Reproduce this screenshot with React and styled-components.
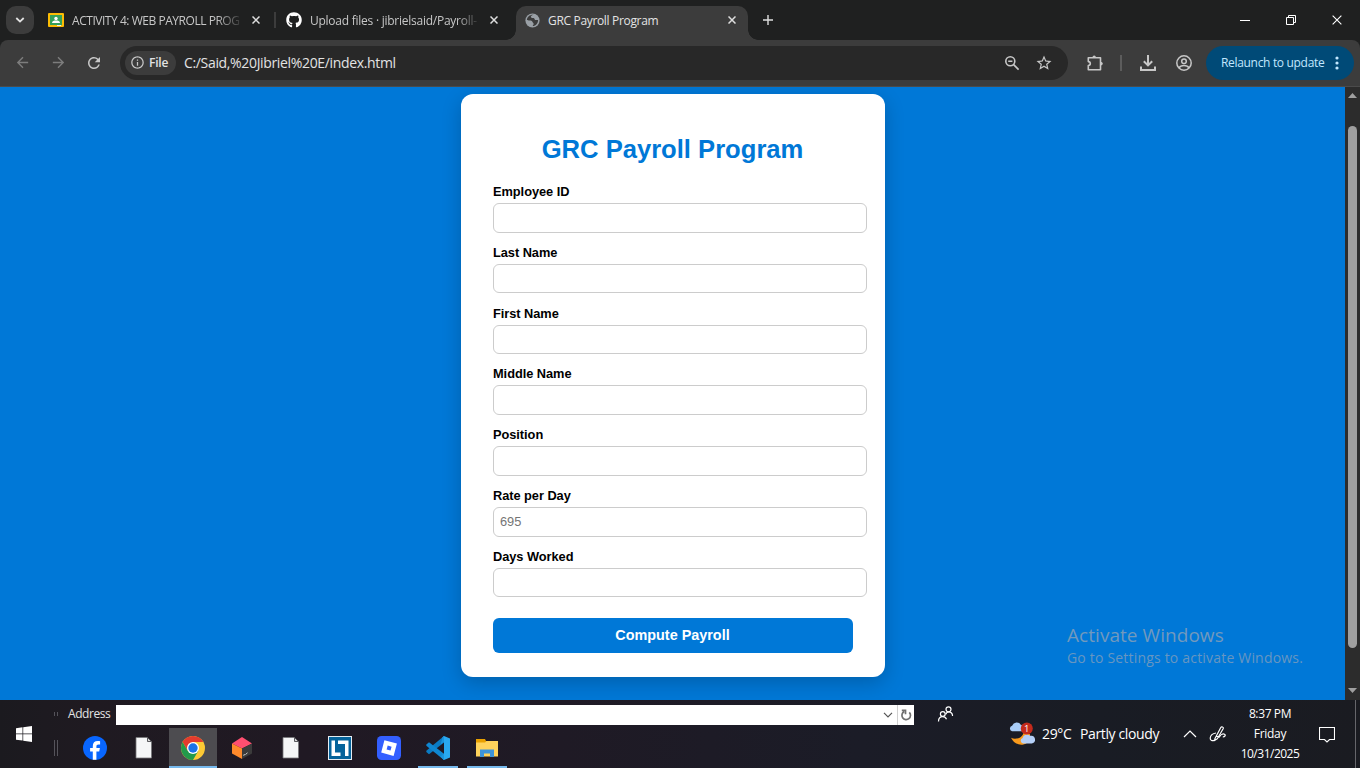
import React from "react";
import styled, { createGlobalStyle } from "styled-components";
import { MdArrowBack, MdArrowForward, MdRefresh, MdInfoOutline, MdStarBorder } from "react-icons/md";
import { FaGithub } from "react-icons/fa";

const Global = createGlobalStyle`
  * { box-sizing: border-box; }
  html, body { margin: 0; padding: 0; overflow: hidden; }
  body { font-family: "Open Sans", "Noto Sans", sans-serif; }
  svg { display: block; flex: none; }
`;

const Screen = styled.div`
  width: 1360px;
  height: 768px;
  display: flex;
  flex-direction: column;
  overflow: hidden;
  background: #1f2020;
`;

const Label = styled.span`
  flex: none;
  width: ${(p) => (p.$w ? `${p.$w}px` : "auto")};
  font-size: ${(p) => p.$size || 12}px;
  line-height: ${(p) => p.$lh || 16}px;
  letter-spacing: ${(p) => p.$ls || 0}px;
  font-weight: ${(p) => p.$weight || 400};
  color: ${(p) => p.$color || "#e3e3e3"};
  white-space: nowrap;
`;

/* ---------- tab strip ---------- */
const TabStrip = styled.div`
  height: 40px;
  flex: none;
  display: flex;
  background: #1f2020;
`;

const TabSearch = styled.div`
  width: 28px;
  height: 28px;
  margin: 6px 6px 0;
  border-radius: 10px;
  background: #3c3c3c;
  display: grid;
  place-items: center;
`;

const Tab = styled.div`
  width: ${(p) => p.$w}px;
  height: 34px;
  margin-top: 6px;
  padding: 0 ${(p) => p.$pr}px 6px ${(p) => p.$pl}px;
  display: flex;
  align-items: center;
  border-radius: 10px 10px 0 0;
  background: ${(p) => (p.$active ? "#3c3c3c" : "transparent")};
  position: relative;
  ${(p) =>
    p.$active &&
    `
    &::before, &::after {
      content: "";
      position: absolute;
      bottom: 0;
      width: 10px;
      height: 10px;
    }
    &::before { left: -10px; background: radial-gradient(circle at 0 0, transparent 9.5px, #3c3c3c 10px); }
    &::after { right: -10px; background: radial-gradient(circle at 100% 0, transparent 9.5px, #3c3c3c 10px); }
  `}
`;

const TabTitle = styled(Label)`
  margin: 2px auto 0 8px;
  ${(p) => p.$fade && `mask-image: linear-gradient(90deg, #000 calc(100% - ${p.$fade}px), rgba(0, 0, 0, 0.15));`}
`;

const TabDivider = styled.div`
  width: 2px;
  height: 16px;
  margin-top: 12px;
  background: #3c3c3c;
`;

const NewTab = styled.div`
  width: 40px;
  height: 40px;
  display: grid;
  place-items: center;
`;

const WindowButtons = styled.div`
  margin-left: auto;
  display: flex;
`;

const WindowButton = styled.div`
  width: 46px;
  height: 40px;
  display: grid;
  place-items: center;
`;

/* ---------- toolbar ---------- */
const Toolbar = styled.div`
  height: 47px;
  flex: none;
  display: flex;
  align-items: center;
  padding: 0 6px 1px 4px;
  border-radius: 8px 8px 0 0;
  border-bottom: 1px solid #4b4b4b;
  background: #3c3c3c;
  color: #c7c7c7;
`;

const ToolButton = styled.div`
  width: ${(p) => p.$w || 36}px;
  height: 34px;
  flex: none;
  display: grid;
  place-items: center;
  color: ${(p) => (p.$dim ? "#7d7d7d" : "#c7c7c7")};
`;

const Omnibox = styled.div`
  width: 948px;
  height: 34px;
  margin-left: 8px;
  padding: 0 8px 0 5px;
  border-radius: 17px;
  background: #282828;
  display: flex;
  align-items: center;
`;

const FileChip = styled.div`
  width: 51px;
  height: 24px;
  margin-right: 8px;
  padding-left: 5px;
  border-radius: 12px;
  background: #3c3c3c;
  display: flex;
  align-items: center;
  gap: 4px;
`;

const Spacer = styled.div`
  flex: 1;
`;

const ToolDivider = styled.div`
  width: 2px;
  height: 16px;
  margin: 0 8px 0 -2px;
  background: #5c5c5c;
`;

const UpdatePill = styled.div`
  width: 148px;
  height: 34px;
  padding: 0 15px 0 15px;
  margin-left: auto;
  border-radius: 17px;
  background: #004a77;
  display: flex;
  align-items: center;
  justify-content: space-between;
`;

/* ---------- page ---------- */
const Viewport = styled.div`
  height: 613px;
  flex: none;
  display: flex;
  position: relative;
`;

const Page = styled.main`
  flex: 1;
  padding: 7px 0 0 461px;
  background: #0078d7;
  overflow: hidden;
  font-family: "Liberation Sans", Arial, sans-serif;
`;

const Card = styled.form`
  width: 424px;
  height: 583px;
  padding: 32px;
  border-radius: 12px;
  background: #fff;
  box-shadow: 0 6px 20px rgba(0, 0, 0, 0.2);
`;

const Title = styled.h2`
  height: 57.1px;
  margin: 0 1px 0 0;
  padding-top: 9px;
  font-size: 25.6px;
  line-height: 29px;
  text-align: center;
  color: #0078d7;
`;

const Field = styled.label`
  display: block;
  height: 60.8px;
  padding-top: 1px;
  font-size: 12.8px;
  line-height: 15px;
  letter-spacing: -0.04px;
  font-weight: 700;
  color: #000;
`;

const Input = styled.input`
  display: block;
  width: 374px;
  height: 29.6px;
  margin-top: 4px;
  padding: 0 6px 1px;
  border: 1px solid #ccc;
  border-radius: 6px;
  background: #fff;
  font: 400 12.8px "Liberation Sans", Arial, sans-serif;
  outline: none;
  &::placeholder { color: #757575; }
`;

const Submit = styled.button`
  display: block;
  width: 360px;
  height: 35px;
  margin-top: 9.2px;
  padding: 0 1px 0 0;
  border: 0;
  border-radius: 6px;
  background: #0078d7;
  color: #fff;
  font: 700 14.4px "Liberation Sans", Arial, sans-serif;
`;

const ScrollTrack = styled.div`
  width: 15px;
  padding: 6px 0 7px;
  background: #2c2c2c;
  display: flex;
  flex-direction: column;
  align-items: center;
`;

const ScrollThumb = styled.div`
  width: 9px;
  height: 522px;
  margin: 28px 0 auto;
  border-radius: 5px;
  background: #9f9f9f;
`;

const Watermark = styled.div`
  position: absolute;
  left: 1067px;
  top: 536px;
  display: flex;
  flex-direction: column;
`;

/* ---------- taskbar ---------- */
const Taskbar = styled.footer`
  height: 68px;
  display: flex;
  background: linear-gradient(90deg, #1b1a1f 0, #1f1a21 90px, #201923 300px, #1f1a25 560px, #1b1c27 860px, #191c24 1100px, #1a1b21 1360px);
`;

const StartButton = styled.div`
  width: 48px;
  display: grid;
  place-items: center;
`;

const Bands = styled.div`
  width: 866px;
  display: flex;
  flex-direction: column;
`;

const AddressBand = styled.div`
  height: 28px;
  padding: 0 0 0 6px;
  display: flex;
  align-items: center;
`;

const AddressLabel = styled(Label)`
  margin-left: 10px;
`;

const Grip = styled.div`
  width: 4px;
  height: ${(p) => p.$h}px;
  border: solid #55535a;
  border-width: 0 1px;
`;

const AddressBox = styled.div`
  width: 798px;
  height: 20px;
  flex: none;
  margin-top: 2px;
  margin-left: auto;
  background: #fff;
  display: flex;
  align-items: center;
  justify-content: flex-end;
`;

const AddressRefresh = styled.div`
  width: 17px;
  height: 20px;
  margin-left: 4px;
  border-left: 1px solid #d0d0d0;
  display: grid;
  place-items: center;
`;

const AppsBand = styled.div`
  height: 40px;
  padding-left: 6px;
  display: flex;
  align-items: center;
`;

const Apps = styled.div`
  display: flex;
  gap: 1px;
  margin-left: 13px;
`;

const AppButton = styled.div`
  width: 48px;
  height: 40px;
  display: flex;
  flex-direction: column;
  align-items: center;
  padding-top: 8px;
  background: ${(p) => (p.$active ? "#4d4c50" : "transparent")};
  &::after {
    content: "";
    width: ${(p) => (p.$active ? 48 : 40)}px;
    height: 2px;
    margin-top: auto;
    background: ${(p) => (p.$open ? "#76b9ed" : "transparent")};
  }
`;

const People = styled.div`
  width: 64px;
  padding: 6px 0 0 23px;
`;

const Tray = styled.div`
  flex: 1;
  padding-left: 31px;
  display: flex;
  align-items: center;
`;

const WeatherIcon = styled.div`
  width: 33px;
`;

const TrayIcon = styled.div`
  width: ${(p) => p.$w}px;
  display: grid;
  place-items: center;
`;

const Clock = styled.div`
  width: 74px;
  display: flex;
  flex-direction: column;
  align-items: center;
`;

const ShowDesktop = styled.div`
  width: 5px;
  height: 68px;
  margin-left: auto;
  border-left: 1px solid #66666b;
`;

/* ---------- drawings ---------- */
const CloseX = ({ size = 8, color = "#dedede", sw = 1.5 }) => (
  <svg width={size} height={size} viewBox="0 0 8 8" stroke={color} strokeWidth={sw} fill="none">
    <path d="M.5 .5l7 7M7.5 .5l-7 7" />
  </svg>
);

const ClassroomIcon = () => (
  <svg width="16" height="14" viewBox="0 0 16 14">
    <rect width="16" height="14" rx="1" fill="#fbbc04" />
    <rect x="2" y="2" width="12" height="10" fill="#34a05a" />
    <circle cx="8" cy="5.500" r="1.700" fill="#fff" />
    <path d="M4 10c0-1.900 2-2.400 4-2.400s4 .5 4 2.400z" fill="#fff" />
    <path d="M9 12h4v1H9z" fill="#f1f1f1" />
  </svg>
);

const GlobeIcon = () => (
  <svg width="15" height="15" viewBox="0 0 15 15">
    <circle cx="7.5" cy="7.5" r="7.1" fill="#9aa0a6" />
    <path d="M8.600 1.900C6.700 1.900 5.700 2.900 5.900 4c.2 1 1.600 1 2.700 1.100.9.100.7 1.300 1.500 1.800.9.500 2-.3 3 .3-.1 3-2.200 5.500-5.300 5.900-.2-.9.900-1.300.9-2.100 0-1.100-.9-1.200-1.200-2.100C7.200 8 5.800 7.700 4.500 7.600 3.300 7.500 2.700 6.900 1.900 6.900 2.200 4 4.800 1.600 8.600 1.900z" fill="#3c3c3c" />
    <path d="M8.300 1.400c-.9.600-1 1.400-.4 1.900.8.600 2.200.2 2.700 1.100.4.700 1.400.8 2.100.4" fill="#9aa0a6" />
  </svg>
);

const ZoomOutIcon = () => (
  <svg width="16" height="16" viewBox="0 0 16 16" fill="none" stroke="#c7c7c7" strokeWidth="1.6">
    <circle cx="6.3" cy="6.3" r="4.5" />
    <path d="M9.6 9.6l5 5M4.2 6.3h4.2" />
  </svg>
);

const PuzzleIcon = () => (
  <svg width="18" height="18" viewBox="0 0 18 18">
    <path d="M2.3 3.700h12.200v12.100H2.300v-4.200c1.300-.1 2-.9 2-2s-.7-1.900-2-2z" fill="none" stroke="#c7c7c7" strokeWidth="1.6" strokeLinejoin="round" />
    <path d="M6.500 3.500c0-1.200.7-2 1.700-2s1.700.8 1.700 2zM14.800 7.900c1.200 0 2 .7 2 1.700s-.8 1.800-2 1.800z" fill="#c7c7c7" />
  </svg>
);

const DownloadIcon = () => (
  <svg width="18" height="18" viewBox="0 0 18 18" fill="none" stroke="#c7c7c7" strokeWidth="2">
    <path d="M9 1v10M4.8 7.2L9 11.4l4.2-4.2M2 12.5V16h14v-3.5" />
  </svg>
);

const ProfileIcon = () => (
  <svg width="18" height="18" viewBox="0 0 18 18" fill="none" stroke="#c7c7c7" strokeWidth="1.5">
    <circle cx="9" cy="9" r="7.2" />
    <circle cx="9" cy="7.2" r="2.3" />
    <path d="M4 14c1-1.8 3-2.5 5-2.5s4 .7 5 2.5" />
  </svg>
);

const DotsIcon = () => (
  <svg width="4" height="14" viewBox="0 0 4 14" fill="#c2e7ff">
    <circle cx="2" cy="2" r="1.6" />
    <circle cx="2" cy="7" r="1.6" />
    <circle cx="2" cy="12" r="1.6" />
  </svg>
);

const FacebookIcon = () => (
  <svg width="24" height="24" viewBox="0 0 24 24">
    <circle cx="12" cy="12" r="12" fill="#0866ff" />
    <path d="M9.800 23.800v-8.300H7.100v-3.600h2.700v-1.700c0-3.600 1.700-5.300 5-5.300.8 0 1.800.2 2.300.3v3.200h-1.500c-1.700 0-2.200.7-2.200 2v1.500h3.500l-.7 3.600h-2.800v8.300z" fill="#fff" />
  </svg>
);

const FileIcon = () => (
  <svg width="24" height="24" viewBox="0 0 24 24">
    <path d="M4 1.500h11.500l4 4v16.500H4z" fill="#f5f6f7" stroke="#77777a" strokeWidth=".8" />
    <path d="M15.500 1.500v4h4z" fill="#d8d8d8" stroke="#4b4b4f" strokeWidth=".9" />
  </svg>
);

const ChromeIcon = () => (
  <svg width="24" height="24" viewBox="0 0 24 24">
    <circle cx="12" cy="12" r="12" fill="#fcc934" />
    <path d="M1.610 6A12 12 0 0 1 22.390 6H12L6.800 15z" fill="#e33b2e" />
    <path d="M1.610 6A12 12 0 0 0 12 24l5.200-9H6.800z" fill="#229a4b" />
    <circle cx="12" cy="12" r="6" fill="#fff" />
    <circle cx="12" cy="12" r="4.7" fill="#1a73e8" />
  </svg>
);

const CubeIcon = () => (
  <svg width="24" height="24" viewBox="0 0 24 24">
    <path d="M12 1l10 6.500-10 5L2 7.500z" fill="#ff4f70" />
    <path d="M2 7.500l10 5V23L2 17.500z" fill="#ff8a2b" />
    <path d="M22 7.500l-10 5V23l10-5.500z" fill="#3b3b3b" />
    <path d="M13.200 19.300l2-.8M15.500 18.500l2-1.700" stroke="#ddd" strokeWidth=".9" />
  </svg>
);

const LtIcon = () => (
  <svg width="24" height="24" viewBox="0 0 24 24">
    <rect x=".5" y=".5" width="23" height="23" fill="#05639b" stroke="#e5edf2" />
    <path d="M3.500 4.500H7v12h5.500V20H3.500zM10 4.500h10.500V20H17V8h-7z" fill="#fff" />
  </svg>
);

const RobloxIcon = () => (
  <svg width="24" height="24" viewBox="0 0 24 24">
    <rect width="24" height="24" rx="4.5" fill="#335fff" />
    <path fillRule="evenodd" d="M7.400 4.200l12.500 3.300-3.300 12.400L4.200 16.600zM10.700 9.600l-1.100 3.900 3.900 1.100 1.100-3.900z" fill="#fff" />
  </svg>
);

const CodeIcon = () => (
  <svg width="24" height="24" viewBox="0 0 24 24">
    <path d="M18 0v6.500L3 18.200l-2.700-2.300v-1.200z" fill="#0a7bc4" />
    <path d="M.3 8.500L3 6.200l15 11.600V24L.3 9.800z" fill="#0f87d2" />
    <path d="M18 0l6 2.500v19L18 24l-1.500-1.500L18 18V6l-1.500-4.500z" fill="#29a8f0" />
    <path d="M16.500 1.500L18 0v6l-3.500 2.800zM18 24l-3.500-3.500L18 17.500z" fill="#1a93dd" />
  </svg>
);

const FolderIcon = () => (
  <svg width="24" height="24" viewBox="0 0 24 24">
    <path d="M1 3h9l1 2h11v5H1z" fill="#e8a000" />
    <path d="M1 6.500h9L11.500 5H23v15.500H1z" fill="#ffd35c" />
    <path d="M5 21v-7.500h14V21h-4v-3.500H9V21z" fill="#3d94d9" />
  </svg>
);

const PeopleIcon = () => (
  <svg width="17" height="17" viewBox="0 0 17 17" fill="none" stroke="#fff" strokeWidth="1.2">
    <circle cx="5.800" cy="8" r="2.4" />
    <path d="M1.500 15.500c0-3 1.800-4.900 4.200-4.900s3.300 1.300 3.800 2.600" />
    <circle cx="11.500" cy="3.300" r="2.500" />
    <path d="M8.800 8.300c.5-1.600 1.500-2.400 2.900-2.400 2.200 0 3.700 1.600 3.900 4.100" />
  </svg>
);

const WeatherArt = () => (
  <svg width="26" height="24" viewBox="0 0 26 24">
    <path d="M15 9c-.5 4-3 7-7 7.500-2 .3-4 .2-6-.8 2.500 5 6.500 7.500 11.500 7 5.500-.7 8-5 7.500-10.500z" fill="#f99a1c" />
    <path d="M3 9.300A2.900 2.900 0 0 1 3.100 3.700 5 5 0 0 1 12 3a3.400 3.400 0 0 1 1.500 6.300z" fill="#a9cdf7" />
    <path d="M14 21.500a2.900 2.900 0 0 1-.3-5.600 4.500 4.500 0 0 1 7.500-2.100 3.900 3.900 0 0 1 1.800 7.700z" fill="#b5d0f8" />
    <circle cx="17.800" cy="6.500" r="6" fill="#c42b1c" />
    <text x="17.800" y="10" fontSize="9.5" fill="#fff" textAnchor="middle" fontFamily="Open Sans">1</text>
  </svg>
);

const PenIcon = () => (
  <svg width="18" height="18" viewBox="0 0 18 18" fill="none" stroke="#fff" strokeWidth="1.2" strokeLinejoin="round">
    <path d="M6 13.500L11.800 2.500c.7-1.200 3-.4 2.500 1L8.300 13.800l-2.800 1.800zM7.300 10.800l2.800 1.300" />
    <path d="M7 8C3.500 8.500 1.500 10.500 1.200 13c-.2 2.500 2.500 3.300 4 2.200M10 12.500c1.500-3 4-4 5.500-3.300 1.500.8.5 2.800-1.700 2.800" />
  </svg>
);

const fields = ["Employee ID", "Last Name", "First Name", "Middle Name", "Position", "Rate per Day", "Days Worked"];

const apps = [
  { icon: FacebookIcon },
  { icon: FileIcon },
  { icon: ChromeIcon, active: true, open: true },
  { icon: CubeIcon },
  { icon: FileIcon },
  { icon: LtIcon },
  { icon: RobloxIcon },
  { icon: CodeIcon, open: true },
  { icon: FolderIcon, open: true },
];

export default function App() {
  return (
    <Screen>
      <Global />
      <TabStrip>
        <TabSearch>
          <svg width="10" height="6" viewBox="0 0 10 6" fill="none" stroke="#e3e3e3" strokeWidth="1.8">
            <path d="M1.300 1L5 4.600 8.700 1" />
          </svg>
        </TabSearch>
        <Tab $w={234} $pl={8} $pr={14}>
          <ClassroomIcon />
          <TabTitle $fade={24} $ls={-0.46} $color="#c7c7c7">ACTIVITY 4: WEB PAYROLL PROG</TabTitle>
          <CloseX />
        </Tab>
        <TabDivider />
        <Tab $w={240} $pl={10} $pr={18}>
          <FaGithub size={16} color="#fff" />
          <TabTitle $fade={20} $ls={-0.25} $color="#c7c7c7">Upload files · jibrielsaid/Payroll-</TabTitle>
          <CloseX />
        </Tab>
        <Tab $w={232} $pl={9} $pr={12} $active>
          <GlobeIcon />
          <TabTitle $ls={-0.33}>GRC Payroll Program</TabTitle>
          <CloseX />
        </Tab>
        <NewTab>
          <svg width="10" height="10" viewBox="0 0 10 10" stroke="#dedede" strokeWidth="1.4">
            <path d="M5 0v10M0 5h10" />
          </svg>
        </NewTab>
        <WindowButtons>
          <WindowButton>
            <svg width="10" height="1"><rect width="10" height="1" fill="#fff" /></svg>
          </WindowButton>
          <WindowButton>
            <svg width="10" height="10" fill="none" stroke="#fff">
              <path d="M.5 2.500h7v7h-7zM2.500 2.500v-2h7v7h-2" />
            </svg>
          </WindowButton>
          <WindowButton><CloseX size={10} color="#fff" sw={0.9} /></WindowButton>
        </WindowButtons>
      </TabStrip>

      <Toolbar>
        <ToolButton $dim><MdArrowBack size={17} /></ToolButton>
        <ToolButton $dim><MdArrowForward size={17} /></ToolButton>
        <ToolButton><MdRefresh size={18} /></ToolButton>
        <Omnibox>
          <FileChip>
            <MdInfoOutline size={15} />
            <Label $weight={600} $ls={-0.2}>File</Label>
          </FileChip>
          <Label $size={14} $lh={20} $ls={-0.34}>C:/Said,%20Jibriel%20E/index.html</Label>
          <Spacer />
          <ToolButton $w={32}><ZoomOutIcon /></ToolButton>
          <ToolButton $w={32}><MdStarBorder size={18} /></ToolButton>
        </Omnibox>
        <ToolButton $w={54}><PuzzleIcon /></ToolButton>
        <ToolDivider />
        <ToolButton><DownloadIcon /></ToolButton>
        <ToolButton><ProfileIcon /></ToolButton>
        <UpdatePill>
          <Label $ls={-0.32} $color="#c2e7ff">Relaunch to update</Label>
          <DotsIcon />
        </UpdatePill>
      </Toolbar>

      <Viewport>
        <Page>
          <Card>
            <Title>GRC Payroll Program</Title>
            {fields.map((name) => (
              <Field key={name}>
                {name}
                <Input placeholder={name === "Rate per Day" ? "695" : ""} />
              </Field>
            ))}
            <Submit type="button">Compute Payroll</Submit>
          </Card>
        </Page>
        <ScrollTrack>
          <svg width="9" height="5"><path d="M0 5L4.500 0 9 5z" fill="#9f9f9f" /></svg>
          <ScrollThumb />
          <svg width="9" height="5"><path d="M0 0L4.500 5 9 0z" fill="#9f9f9f" /></svg>
        </ScrollTrack>
        <Watermark>
          <Label $size={19} $lh={25} $ls={0.05} $color="#7199bd">Activate Windows</Label>
          <Label $size={14} $lh={20} $ls={0.19} $color="#6796c1">Go to Settings to activate Windows.</Label>
        </Watermark>
      </Viewport>

      <Taskbar>
        <StartButton>
          <svg width="16" height="16" viewBox="0 0 16 16" fill="#fff">
            <path d="M0 2.200l6.500-.9v6.200H0zM7.200 1.200L16 0v7.500H7.200zM0 8.300h6.500v6.300L0 13.700zM7.200 8.300H16V16l-8.800-1.200z" />
          </svg>
        </StartButton>
        <Bands>
          <AddressBand>
            <Grip $h={4} />
            <AddressLabel $ls={-0.45}>Address</AddressLabel>
            <AddressBox>
              <svg width="10" height="6" viewBox="0 0 10 6" fill="none" stroke="#555" strokeWidth="1.2">
                <path d="M1 .8l4 4 4-4" />
              </svg>
              <AddressRefresh>
                <svg width="12" height="12" viewBox="0 0 12 12" fill="none" stroke="#707070" strokeWidth="1.7">
                  <path d="M9.300 3.300a4.300 4.300 0 1 1-5.100-.8M1.800 1.400h3.700v3.800" />
                </svg>
              </AddressRefresh>
            </AddressBox>
          </AddressBand>
          <AppsBand>
            <Grip $h={16} />
            <Apps>
              {apps.map(({ icon: Icon, active, open }, i) => (
                <AppButton key={i} $active={active} $open={open}><Icon /></AppButton>
              ))}
            </Apps>
          </AppsBand>
        </Bands>
        <People><PeopleIcon /></People>
        <Tray>
          <WeatherIcon><WeatherArt /></WeatherIcon>
          <Label $w={38} $size={14} $lh={20} $ls={-0.35} $color="#fff">29°C</Label>
          <Label $w={97} $size={14} $lh={20} $ls={-0.37} $color="#fff">Partly cloudy</Label>
          <TrayIcon $w={26}>
            <svg width="14" height="8" viewBox="0 0 14 8" fill="none" stroke="#fff" strokeWidth="1.2">
              <path d="M1 7l6-6 6 6" />
            </svg>
          </TrayIcon>
          <TrayIcon $w={30}><PenIcon /></TrayIcon>
          <Clock>
            <Label $lh={20} $ls={-0.38} $color="#fff">8:37 PM</Label>
            <Label $lh={20} $ls={-0.3} $color="#fff">Friday</Label>
            <Label $lh={20} $ls={-0.5} $color="#fff">10/31/2025</Label>
          </Clock>
          <TrayIcon $w={40}>
            <svg width="16" height="17" viewBox="0 0 16 17" fill="none" stroke="#fff" strokeWidth="1.1">
              <path d="M.5 1.500h15v12h-5L8 16l-2.500-2.500h-5z" />
            </svg>
          </TrayIcon>
          <ShowDesktop />
        </Tray>
      </Taskbar>
    </Screen>
  );
}
